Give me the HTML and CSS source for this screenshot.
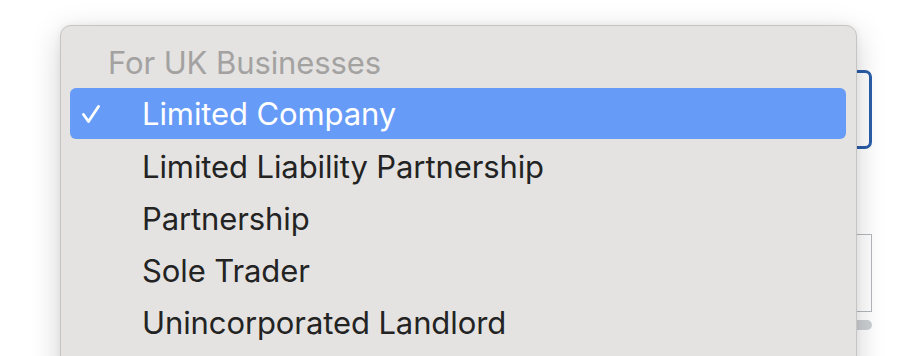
FILE: index.html
```html
<!DOCTYPE html>
<html>
<head>
<meta charset="utf-8">
<link rel="stylesheet" href="styles.css">
</head>
<body>
<div class="form">
  <div class="select-box"></div>
  <div class="input-box"></div>
  <div class="scrollbar"></div>
</div>
<div class="menu">
  <div class="menu-header">For UK Businesses</div>
  <div class="menu-item selected">
    <svg class="check" viewBox="0 0 20 20" width="20" height="20"><path d="M2.5 9.5 L7.5 16.5 L17.5 1.5" fill="none" stroke="#fff" stroke-width="2.8" stroke-linecap="round" stroke-linejoin="round"/></svg>
    <span>Limited Company</span>
  </div>
  <div class="menu-item"><span>Limited Liability Partnership</span></div>
  <div class="menu-item"><span>Partnership</span></div>
  <div class="menu-item"><span>Sole Trader</span></div>
  <div class="menu-item"><span>Unincorporated Landlord</span></div>
</div>
</body>
</html>
```

FILE: styles.css
```css
html, body {
  margin: 0;
  padding: 0;
  background: #ffffff;
  width: 920px;
  height: 356px;
  overflow: hidden;
  font-family: Inter, "Noto Sans", sans-serif;
}

.form {
  margin-left: 120px;
  width: 752px;
  padding-top: 70px;
  display: flex;
  flex-direction: column;
}

.select-box {
  height: 73px;
  border: 3px solid #2a5ea9;
  border-radius: 7px;
}

.input-box {
  margin-top: 85px;
  height: 76px;
  border: 1.5px solid #b3b8bc;
}

.scrollbar {
  margin-top: 8px;
  height: 10px;
  border-radius: 5px;
  background: #cdd0d3;
}

.menu {
  position: absolute;
  left: 60px;
  top: 25px;
  width: 797px;
  height: 400px;
  background: #e4e3e2;
  border: 1px solid #c6c5c4;
  border-radius: 11px;
  box-shadow: 0 8px 30px rgba(0, 0, 0, 0.18), 0 0 6px rgba(0, 0, 0, 0.06);
  padding: 10px 10px 0 9px;
  box-sizing: border-box;
}

.menu-header,
.menu-item {
  height: 52px;
  display: flex;
  align-items: center;
  font-size: 31px;
  color: #232323;
  letter-spacing: -0.1px;
}

.menu-header {
  color: #a3a2a1;
  padding-left: 38px;
  height: 52px;
}

.menu-item {
  padding-left: 72px;
  position: relative;
}

.menu-item.selected {
  height: 51px;
  margin-bottom: 1px;
  background: #669bf7;
  color: #ffffff;
  border-radius: 6px;
}

.check {
  position: absolute;
  left: 11px;
  top: 17px;
}
```
